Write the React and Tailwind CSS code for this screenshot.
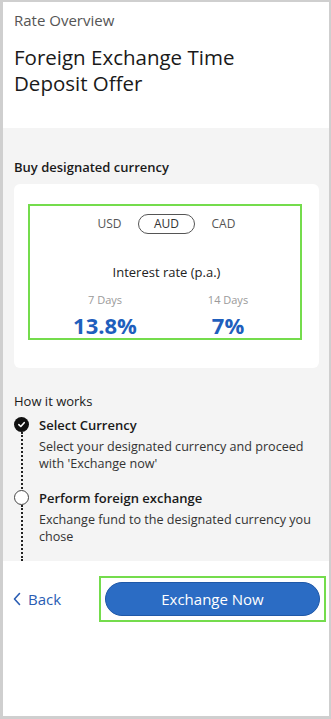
export default function App() {
  const steps = [
    {
      title: "Select Currency",
      desc: "Select your designated currency and proceed with 'Exchange now'",
      done: true,
    },
    {
      title: "Perform foreign exchange",
      desc: "Exchange fund to the designated currency you chose",
      done: false,
    },
  ];

  return (
    <div
      className="w-[331px] h-[719px] border-l-[3px] border-r-2 border-t-2 border-b-[3px] border-[#cfcfcf] bg-white flex flex-col text-[#222]"
      style={{ fontFamily: "'Open Sans', Lato, sans-serif" }}
    >
      {/* HEADER */}
      <div className="px-[11px] pt-[8px] pb-[32px]">
        <p className="text-[15px] leading-[20px] text-[#555]">Rate Overview</p>
        <h1 className="mt-[14px] max-w-[250px] text-[20.5px] leading-[26px] text-[#1a1a1a]">
          Foreign Exchange Time Deposit Offer
        </h1>
      </div>

      {/* BODY */}
      <div className="flex-1 bg-[#f4f4f4] pl-[11px] pr-[10px] pt-[30px] flex flex-col">
        <p className="text-[13px] leading-[18px] font-semibold text-[#1a1a1a]">
          Buy designated currency
        </p>

        <div className="mt-[8px] bg-white rounded-[6px] pl-[14px] pr-[17px] pt-[20px] pb-[28px]">
          <div className="border-2 border-[#74dc4c] pt-[8px] pl-[3px]">
            <div className="flex justify-center text-[12px] text-[#555]">
              <span className="w-[57px] h-[20px] flex items-center justify-center">USD</span>
              <span className="w-[57px] h-[20px] flex items-center justify-center rounded-full border border-[#555] text-[#333]">
                AUD
              </span>
              <span className="w-[57px] h-[20px] flex items-center justify-center">CAD</span>
            </div>

            <p className="mt-[29px] text-center text-[13px] leading-[18px] text-[#222]">
              Interest rate (p.a.)
            </p>

            <div className="mt-[12px] flex justify-center gap-[23px]">
              {[
                ["7 Days", "13.8%"],
                ["14 Days", "7%"],
              ].map(([label, rate]) => (
                <div key={label} className="w-[100px] flex flex-col items-center">
                  <span className="text-[11px] leading-[14px] text-[#9a9a9a]">{label}</span>
                  <span className="mt-[5px] text-[22px] leading-[26px] font-bold text-[#1f5fbd]">
                    {rate}
                  </span>
                </div>
              ))}
            </div>
          </div>
        </div>

        <p className="mt-[24px] text-[13px] leading-[18px] text-[#1a1a1a]">How it works</p>

        <div className="mt-[6px] flex-1 flex flex-col">
          {steps.map((s, i) => (
            <div key={s.title} className={"flex gap-[10px] " + (i === steps.length - 1 ? "flex-1" : "")}>
              <div className="w-[15px] flex flex-col items-center">
                {s.done ? (
                  <div className="mt-[1px] w-[15px] h-[15px] rounded-full bg-[#111] flex items-center justify-center">
                    <svg width="9" height="9" viewBox="0 0 10 10" fill="none">
                      <path d="M2 5.2 L4.2 7.2 L8 3" stroke="white" strokeWidth="1.8" strokeLinecap="round" strokeLinejoin="round" />
                    </svg>
                  </div>
                ) : (
                  <div className="mt-[1px] w-[15px] h-[15px] rounded-full border border-[#444] bg-white" />
                )}
                <div className="flex-1 border-l-2 border-dotted border-[#222]" />
              </div>
              <div className={i === 0 ? "pb-[17px]" : "pb-[16px]"}>
                <p className="text-[13px] leading-[18px] font-semibold text-[#1a1a1a]">{s.title}</p>
                <p className="mt-[4px] text-[12.6px] leading-[17px] text-[#333]">{s.desc}</p>
              </div>
            </div>
          ))}
        </div>
      </div>

      {/* FOOTER */}
      <div className="h-[156px] pl-[10px] pt-[15px] flex items-start">
        <div className="flex items-center h-[46px] w-[86px] text-[#2a5db3]">
          <svg width="8" height="14" viewBox="0 0 8 14" fill="none">
            <path d="M6.5 1.5 L1.5 7 L6.5 12.5" stroke="currentColor" strokeWidth="1.6" strokeLinecap="round" strokeLinejoin="round" />
          </svg>
          <span className="ml-[7px] text-[15px]">Back</span>
        </div>
        <div className="border-2 border-[#74dc4c] p-[4px] w-[227px]">
          <button className="w-full h-[34px] rounded-full bg-[#2b6cc4] border border-[#1f58a8] text-white text-[15px]">
            Exchange Now
          </button>
        </div>
      </div>
    </div>
  );
}
